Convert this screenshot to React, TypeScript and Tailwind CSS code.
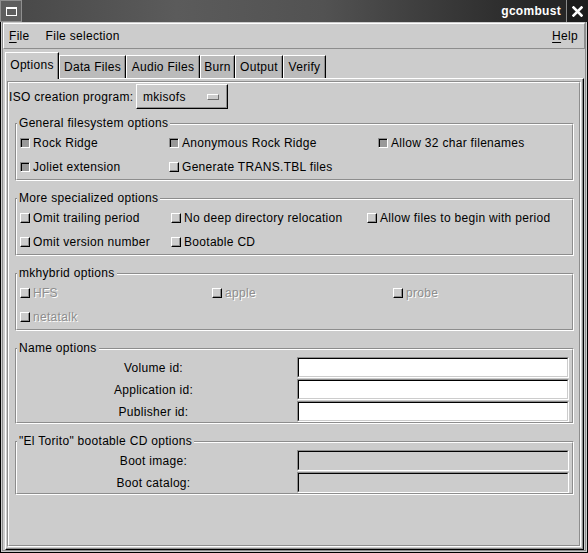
import React from "react";

type CheckProps = { label: string; checked?: boolean; disabled?: boolean };

function CheckButton({ label, checked = false, disabled = false }: CheckProps) {
  return (
    <div className="flex h-[24px] items-center">
      {checked ? (
        <span className="block h-[10px] w-[10px] shrink-0 border border-t-[#8d8d8d] border-l-[#8d8d8d] border-r-white border-b-white">
          <span className="block h-full w-full border-t border-l border-t-black border-l-black bg-[#999999]" />
        </span>
      ) : (
        <span className="block h-[10px] w-[10px] shrink-0 border border-t-white border-l-white border-r-black border-b-black">
          <span className="block h-full w-full border-r border-b border-r-[#8d8d8d] border-b-[#8d8d8d]" />
        </span>
      )}
      <span
        className={
          disabled
            ? "ml-[3px] whitespace-nowrap text-[#8e8e8e] [text-shadow:1px_1px_0_#ffffff]"
            : "ml-[3px] whitespace-nowrap"
        }
      >
        {label}
      </span>
    </div>
  );
}

function Frame({
  title,
  className = "",
  children,
}: {
  title: string;
  className?: string;
  children: React.ReactNode;
}) {
  return (
    <div
      className={
        "relative ml-[6px] mr-[5px] border border-t-[#8d8d8d] border-l-[#8d8d8d] border-r-white border-b-white " +
        className
      }
    >
      <div className="border border-t-white border-l-white border-r-[#8d8d8d] border-b-[#8d8d8d]">
        {children}
      </div>
      <span className="absolute left-[1px] top-[-8px] whitespace-nowrap bg-[#cccccc] px-[2px] leading-[14px]">
        {title}
      </span>
    </div>
  );
}

function Entry({ disabled = false }: { disabled?: boolean }) {
  return (
    <div className="h-[21px] border border-t-[#8d8d8d] border-l-[#8d8d8d] border-r-white border-b-white">
      <div
        className={
          "h-full border border-t-black border-l-black border-r-[#cccccc] border-b-[#cccccc] " +
          (disabled ? "bg-[#cccccc]" : "bg-white")
        }
      />
    </div>
  );
}

function EntryRows({ rows, disabled = false }: { rows: string[]; disabled?: boolean }) {
  return (
    <div className="grid grid-cols-[273px_1fr] gap-x-[7px] gap-y-[1px] pr-[3px] pt-[7px]">
      {rows.map((r) => (
        <React.Fragment key={r}>
          <div className="flex h-[21px] items-center justify-center">{r}</div>
          <Entry disabled={disabled} />
        </React.Fragment>
      ))}
    </div>
  );
}

const tabs = [
  { name: "Options", w: "w-[54px]" },
  { name: "Data Files", w: "w-[67px]" },
  { name: "Audio Files", w: "w-[74px]" },
  { name: "Burn", w: "w-[35px]" },
  { name: "Output", w: "w-[48px]" },
  { name: "Verify", w: "w-[43px]" },
];

function TitleBar() {
  return (
    <div className="flex h-[22px] bg-[linear-gradient(90deg,#474747_0%,#5b5b5b_30%,#525252_55%,#3a3a3a_75%,#262626_92%)]">
      <div className="flex h-[22px] w-[22px] items-center justify-center border border-[#8f8f8f] bg-[#5e5e5e]">
        <span className="block h-[9px] w-[11px] border border-t-2 border-white" />
      </div>
      <div className="flex-1" />
      <span className="mr-[5px] self-center whitespace-nowrap text-[12px] font-bold text-white">gcombust</span>
      <div className="flex w-[22px] items-center justify-center border-l border-[#8a8a8a] bg-[#1c1c1c]">
        <svg width="11" height="11" viewBox="0 0 11 11">
          <path d="M1.5 1.5 L9.5 9.5 M9.5 1.5 L1.5 9.5" stroke="#ffffff" strokeWidth="2.6" strokeLinecap="square" />
        </svg>
      </div>
    </div>
  );
}

function MenuBar() {
  return (
    <div className="flex h-[26px] shrink-0 items-center border border-t-white border-l-white border-r-[#8d8d8d] border-b-[#8d8d8d]">
      <span className="pl-[5px]">
        <span className="underline decoration-1 underline-offset-[2px]">F</span>ile
      </span>
      <span className="ml-[16px]">File selection</span>
      <span className="ml-auto mr-[6px]">
        <span className="underline decoration-1 underline-offset-[2px]">H</span>elp
      </span>
    </div>
  );
}

function Tabs() {
  return (
    <div className="flex h-[29px] shrink-0 items-end pl-[2px]">
      {tabs.map((t, i) =>
        i === 0 ? (
          <div
            key={t.name}
            className={
              "relative z-10 -mb-px flex h-[27px] items-center justify-center border-l border-t border-r border-l-white border-t-white border-r-black bg-[#cccccc] pb-[2px] shadow-[inset_-1px_0_0_#8d8d8d] " +
              t.w
            }
          >
            {t.name}
          </div>
        ) : (
          <div
            key={t.name}
            className={
              "flex h-[23px] items-center justify-center border-l border-t border-r border-l-white border-t-white border-r-black bg-[#bbbbbb] shadow-[inset_-1px_0_0_#8d8d8d] " +
              t.w
            }
          >
            {t.name}
          </div>
        )
      )}
    </div>
  );
}

function Page() {
  return (
    <div className="ml-[2px] mr-[1px] flex-1 border border-t-white border-l-white border-r-black border-b-black pb-[2px] pl-[1px] pr-[2px] pt-[2px] shadow-[inset_-1px_-1px_0_#8d8d8d]">
      <div className="h-full border border-t-[#8d8d8d] border-l-[#8d8d8d] border-r-white border-b-white">
        <div className="h-full border border-t-white border-l-white border-r-[#8d8d8d] border-b-[#8d8d8d]">
          <div className="mt-[1px] flex h-[25px] items-center">
            <span className="w-[127px] whitespace-nowrap">ISO creation program:</span>
            <div className="flex h-[25px] w-[92px] items-center border border-t-white border-l-white border-r-black border-b-black pl-[6px] shadow-[inset_-1px_-1px_0_#8d8d8d]">
              <span>mkisofs</span>
              <span className="ml-auto mr-[8px] block h-[6px] w-[12px] border border-t-white border-l-white border-r-[#6e6e6e] border-b-[#6e6e6e]" />
            </div>
          </div>

          <Frame title="General filesystem options" className="mt-[14px]">
            <div className="grid grid-cols-[149px_209px_1fr] pl-[3px] pt-[6px]">
              <CheckButton label="Rock Ridge" checked />
              <CheckButton label="Anonymous Rock Ridge" checked />
              <CheckButton label="Allow 32 char filenames" checked />
              <CheckButton label="Joliet extension" checked />
              <CheckButton label="Generate TRANS.TBL files" />
            </div>
          </Frame>

          <Frame title="More specialized options" className="mt-[17px]">
            <div className="grid grid-cols-[151px_196px_1fr] pl-[3px] pt-[6px]">
              <CheckButton label="Omit trailing period" />
              <CheckButton label="No deep directory relocation" />
              <CheckButton label="Allow files to begin with period" />
              <CheckButton label="Omit version number" />
              <CheckButton label="Bootable CD" />
            </div>
          </Frame>

          <Frame title="mkhybrid options" className="mt-[17px]">
            <div className="grid grid-cols-[192px_181px_1fr] pl-[3px] pt-[6px]">
              <CheckButton label="HFS" disabled />
              <CheckButton label="apple" disabled />
              <CheckButton label="probe" disabled />
              <CheckButton label="netatalk" disabled />
            </div>
          </Frame>

          <Frame title="Name options" className="mt-[17px]">
            <EntryRows rows={["Volume id:", "Application id:", "Publisher id:"]} />
          </Frame>

          <Frame title={'"El Torito" bootable CD options'} className="mt-[17px]">
            <EntryRows rows={["Boot image:", "Boot catalog:"]} disabled />
          </Frame>
        </div>
      </div>
    </div>
  );
}

export default function App() {
  return (
    <div className="h-[553px] w-[588px] overflow-hidden bg-[#cccccc] font-['Liberation_Sans',Arial,sans-serif] text-[12px] leading-[14px] tracking-[0.3px] text-black">
      <TitleBar />
      <div className="h-[531px] border-x border-b border-black px-[1px] pb-[1px]">
        <div className="flex h-full flex-col border-x border-b border-[#8d8d8d] pt-[1px]">
          <MenuBar />
          <Tabs />
          <Page />
        </div>
      </div>
    </div>
  );
}
